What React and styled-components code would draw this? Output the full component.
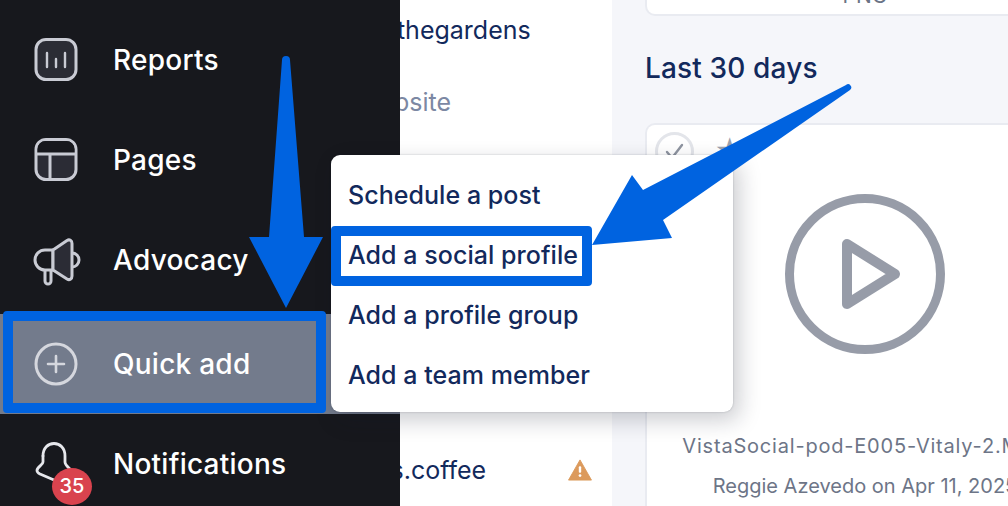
import React from 'react';
import styled, { createGlobalStyle } from 'styled-components';

const font = `Inter, "Noto Sans", "Liberation Sans", sans-serif`;
const navy = '#12295c';
const blue = '#0063e0';

const GlobalStyle = createGlobalStyle`
  html, body {
    margin: 0;
    padding: 0;
    background: #f5f6fa;
  }
  body {
    font-family: ${font};
  }
`;

const Page = styled.div`
  position: relative;
  display: flex;
  width: 1008px;
  height: 506px;
  overflow: hidden;
`;

const Sidebar = styled.nav`
  position: relative;
  z-index: 1;
  flex: none;
  display: flex;
  flex-direction: column;
  box-sizing: border-box;
  width: 400px;
  padding-top: 10px;
  background: #17181d;
`;

const NavItem = styled.div`
  display: flex;
  align-items: center;
  flex: none;
  gap: 35px;
  box-sizing: border-box;
  height: 100px;
  margin-top: ${p => (p.$active ? 4 : 0)}px;
  padding-left: 34px;
  background: ${p => (p.$active ? '#737b8c' : 'transparent')};
  color: #fff;
  font-size: 28px;
  font-weight: 500;
  letter-spacing: 0.25px;
`;

const NavIcon = styled.span`
  position: relative;
  flex: none;
  display: block;
  width: 44px;
  height: 44px;
  svg {
    display: block;
    overflow: visible;
  }
`;

const Badge = styled.span`
  position: absolute;
  left: 18px;
  top: 26px;
  width: 40px;
  height: 37px;
  border-radius: 50%;
  background: #d9434e;
  color: #fff;
  font-size: 20px;
  font-weight: 500;
  letter-spacing: 0;
  line-height: 37px;
  text-align: center;
`;

const ListPanel = styled.section`
  flex: none;
  display: flex;
  flex-direction: column;
  box-sizing: border-box;
  width: 256px;
  margin-left: -44px;
  background: #fff;
`;

const ListRow = styled.div`
  display: flex;
  align-items: center;
  justify-content: space-between;
  box-sizing: border-box;
  height: ${p => p.$height}px;
  margin-top: ${p => p.$top || 0}px;
  padding-right: 20px;
  color: ${p => (p.$muted ? '#7c88a3' : navy)};
  font-size: 25px;
  white-space: nowrap;
`;

const Content = styled.main`
  flex: none;
  display: flex;
  flex-direction: column;
  box-sizing: border-box;
  width: 473px;
  padding-left: 33px;
  background: #f5f6fa;
`;

const TopCard = styled.div`
  flex: none;
  box-sizing: border-box;
  height: 16px;
  border: 2px solid #e9ebf1;
  border-top: 0;
  border-radius: 0 0 10px 10px;
  background: #fff;
  overflow: hidden;
  text-align: center;
  color: #6b7486;
  font-size: 21px;
  line-height: 20px;
`;

const TopLabel = styled.span`
  display: block;
  margin-top: -14px;
`;

const Heading = styled.h2`
  margin: 36px 0 38px;
  color: ${navy};
  font-size: 28px;
  font-weight: 500;
  letter-spacing: 0.15px;
  line-height: 33px;
`;

const MediaCard = styled.article`
  position: relative;
  flex: 1;
  display: flex;
  flex-direction: column;
  align-items: center;
  box-sizing: border-box;
  padding-top: 69px;
  border: 2px solid #e9ebf1;
  border-bottom: 0;
  border-radius: 10px 10px 0 0;
  background: #fff;
`;

const Select = styled.span`
  position: absolute;
  left: 8px;
  top: 7px;
  box-sizing: border-box;
  width: 39px;
  height: 39px;
  border: 3px solid #e3e5ea;
  border-radius: 50%;
  svg {
    display: block;
  }
`;

const Star = styled.span`
  position: absolute;
  left: 67px;
  top: 11px;
  color: #9aa0ad;
  font-size: 30px;
  line-height: 30px;
`;

const Caption = styled.div`
  margin-top: ${p => p.$top}px;
  color: #6d7587;
  font-size: 20px;
  letter-spacing: ${p => p.$spacing || 0}px;
  line-height: 24px;
  text-align: center;
  white-space: nowrap;
`;

const Menu = styled.ul`
  position: absolute;
  z-index: 2;
  left: 331px;
  top: 155px;
  display: flex;
  flex-direction: column;
  box-sizing: border-box;
  width: 402px;
  height: 257px;
  margin: 0;
  padding: 10px 0 7px;
  border-radius: 9px;
  background: #fff;
  list-style: none;
  box-shadow: 0 0 2px rgba(20, 25, 40, 0.25), 6px 8px 22px rgba(20, 25, 40, 0.22);
`;

const MenuItem = styled.li`
  display: flex;
  align-items: center;
  height: 60px;
  padding-left: 17px;
  color: ${navy};
  font-size: 25px;
  font-weight: 500;
  letter-spacing: 0.05px;
`;

const Frame = styled.div`
  position: absolute;
  z-index: 3;
  box-sizing: border-box;
  left: ${p => p.$x}px;
  top: ${p => p.$y}px;
  width: ${p => p.$w}px;
  height: ${p => p.$h}px;
  border: 10px solid ${blue};
  border-radius: 4px;
`;

const Arrows = styled.svg`
  position: absolute;
  z-index: 4;
  left: 0;
  top: 0;
`;

const IconBars = () => (
  <svg width="44" height="44" viewBox="0 0 44 44" fill="none" stroke="#c9cbd4" strokeWidth="3" strokeLinecap="round">
    <rect x="2" y="1.5" width="40" height="40" rx="10" fill="#2b2c35" />
    <path d="M13 15v14M22 21v8M31 15v14" strokeWidth="2.4" />
  </svg>
);

const IconLayout = () => (
  <svg width="44" height="44" viewBox="0 0 44 44" fill="none" stroke="#c9cbd4" strokeWidth="3">
    <rect x="2" y="1.5" width="40" height="40" rx="10" fill="#2b2c35" />
    <path d="M3.500 16v-5a8 8 0 0 1 8-8h21a8 8 0 0 1 8 8v5z" fill="#17181d" stroke="none" />
    <path d="M2 16h40M16 16v25" />
  </svg>
);

const IconMegaphone = () => (
  <svg width="46" height="44" viewBox="0 0 46 44" fill="none" stroke="#c9cbd4" strokeWidth="3" strokeLinejoin="round">
    <path d="M19 12H11a10 10 0 0 0 0 20h8z" />
    <path d="M19 12 33 2.500c2.500-1.500 5 0 5 3v32.500c0 3-2.500 4.500-5 3L19 32z" fill="#2b2c35" />
    <path d="M38 15a7 7 0 0 1 0 14" />
    <path d="M11 32v11a3 3 0 0 0 6 0V32" />
  </svg>
);

const IconPlus = () => (
  <svg width="44" height="44" viewBox="0 0 44 44" fill="none" stroke="#d5d7de" strokeWidth="3" strokeLinecap="round">
    <circle cx="22" cy="22" r="20" />
    <path d="M22 14v16M14 22h16" strokeWidth="2.600" />
  </svg>
);

const IconBell = () => (
  <svg width="44" height="44" viewBox="0 0 44 44" fill="none" stroke="#e6e7ec" strokeWidth="2.800" strokeLinejoin="round" strokeLinecap="round">
    <path d="M9 14C9 6 14 1.500 20 1.500S31 6 31 14v6c0 3 3 5 6 8" />
    <path d="M9 14v6c0 3-6 5-6 8.500 0 1.500 1 2.500 3 3.500l14 6" />
  </svg>
);

const CheckMark = () => (
  <svg width="33" height="33" viewBox="0 0 33 33" fill="none" stroke="#8e94a0" strokeWidth="2.400" strokeLinecap="round" strokeLinejoin="round">
    <path d="M9 17l5 6L24 10" />
  </svg>
);

const WarningIcon = () => (
  <svg width="24" height="22" viewBox="0 0 26 24">
    <path d="M13 1 25.500 23H.5z" fill="#dc9a5c" stroke="#dc9a5c" strokeLinejoin="round" />
    <rect x="11.700" y="8" width="2.600" height="7" rx="1" fill="#fff" />
    <circle cx="13" cy="18" r="1.500" fill="#fff" />
  </svg>
);

const PlayIcon = () => (
  <svg width="160" height="160" viewBox="0 0 160 160" fill="none" stroke="#979ca8" strokeWidth="9" strokeLinejoin="round">
    <circle cx="80" cy="80" r="75.500" />
    <path d="M62 50 110 80 62 110z" strokeWidth="10" />
  </svg>
);

const navItems = [
  { label: 'Reports', icon: <IconBars /> },
  { label: 'Pages', icon: <IconLayout /> },
  { label: 'Advocacy', icon: <IconMegaphone /> },
  { label: 'Quick add', icon: <IconPlus />, active: true },
  { label: 'Notifications', icon: <IconBell />, badge: '35' },
];

const menuItems = ['Schedule a post', 'Add a social profile', 'Add a profile group', 'Add a team member'];

export default function App() {
  return (
    <Page>
      <GlobalStyle />
      <Sidebar>
        {navItems.map(item => (
          <NavItem key={item.label} $active={item.active}>
            <NavIcon>
              {item.icon}
              {item.badge && <Badge>{item.badge}</Badge>}
            </NavIcon>
            {item.label}
          </NavItem>
        ))}
      </Sidebar>
      <ListPanel>
        <ListRow $height={60}>Up thegardens</ListRow>
        <ListRow $height={84} $muted>Website</ListRow>
        <ListRow $height={52} $top={300}>sips.coffee<WarningIcon /></ListRow>
      </ListPanel>
      <Content>
        <TopCard><TopLabel>PNG</TopLabel></TopCard>
        <Heading>Last 30 days</Heading>
        <MediaCard>
          <Select><CheckMark /></Select>
          <Star>★</Star>
          <PlayIcon />
          <Caption $top={80} $spacing={0.8}>VistaSocial-pod-E005-Vitaly-2.MP4</Caption>
          <Caption $top={16}>Reggie Azevedo on Apr 11, 2025</Caption>
        </MediaCard>
      </Content>
      <Menu>
        {menuItems.map(label => <MenuItem key={label}>{label}</MenuItem>)}
      </Menu>
      <Frame $x={3} $y={311} $w={323} $h={102} />
      <Frame $x={331} $y={226} $w={261} $h={60} />
      <Arrows width="1008" height="506" viewBox="0 0 1008 506">
        <path d="M282 60a4 4 0 0 1 8 0l14 177 19 0-37 71-37-71 20 0z" fill={blue} />
        <path d="M846 85a3 3 0 0 1 4 5L663 220l9 18-80 7 40-70 11 15z" fill={blue} />
      </Arrows>
    </Page>
  );
}
